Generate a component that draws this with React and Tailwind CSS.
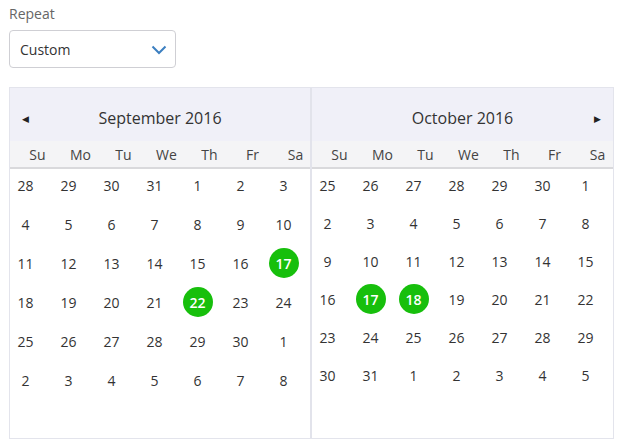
import React from "react";

const sep = [
  [28, 29, 30, 31, 1, 2, 3],
  [4, 5, 6, 7, 8, 9, 10],
  [11, 12, 13, 14, 15, 16, 17],
  [18, 19, 20, 21, 22, 23, 24],
  [25, 26, 27, 28, 29, 30, 1],
  [2, 3, 4, 5, 6, 7, 8],
];
const oct = [
  [25, 26, 27, 28, 29, 30, 1],
  [2, 3, 4, 5, 6, 7, 8],
  [9, 10, 11, 12, 13, 14, 15],
  [16, 17, 18, 19, 20, 21, 22],
  [23, 24, 25, 26, 27, 28, 29],
  [30, 31, 1, 2, 3, 4, 5],
];
const days = ["Su", "Mo", "Tu", "We", "Th", "Fr", "Sa"];

function Month({ title, rows, selected, left, gapClass, widthClass }) {
  return (
    <div className={`${widthClass} flex flex-col overflow-hidden`}>
      <div className="relative h-[53px] bg-[#f0f0f8] flex items-center justify-center pt-[6px]">
        {left ? (
          <span className="absolute left-[12px] top-[24px] text-[9px] text-[#222]">◀</span>
        ) : (
          <span className="absolute right-[12px] top-[24px] text-[9px] text-[#222]">▶</span>
        )}
        <span className="text-[16px] text-[#333]">{title}</span>
      </div>
      <div className="h-[28px] bg-[#f4f4f6] border-b-2 border-[#d9d9dc] flex items-center">
        <div className="ml-[6px] grid grid-cols-[repeat(7,43px)] shrink-0">
          {days.map((d) => (
            <div key={d} className="text-center text-[14px] text-[#444]">
              {d}
            </div>
          ))}
        </div>
      </div>
      <div className={`-ml-[6px] pt-0 grid grid-cols-[repeat(7,43px)] auto-rows-[32px] ${gapClass} shrink-0 w-[301px]`}>
        {rows.flatMap((r, ri) =>
          r.map((d, ci) => {
            const sel = selected.some(([a, b]) => a === ri && b === ci);
            return (
              <div key={`${ri}-${ci}`} className="flex items-center justify-center">
                {sel ? (
                  <span className="w-[30px] h-[30px] rounded-full bg-[#17bf0c] text-white font-semibold text-[14px] flex items-center justify-center">
                    {d}
                  </span>
                ) : (
                  <span className="text-[14px] text-[#333]">{d}</span>
                )}
              </div>
            );
          })
        )}
      </div>
    </div>
  );
}

export default function App() {
  return (
    <div className="w-[619px] h-[445px] bg-white font-['Open_Sans',sans-serif] pl-[9px] pt-[4px]">
      <div className="text-[14px] leading-[20px] text-[#666]">Repeat</div>
      <div className="mt-[6px] w-[167px] h-[38px] border border-[#cfcfd4] rounded-[4px] flex items-center justify-between pl-[10px] pr-[8px]">
        <span className="text-[14px] text-[#333]">Custom</span>
        <svg width="16" height="10" viewBox="0 0 16 10" className="mt-[1px]">
          <path d="M1.5 1.5 L8 8 L14.5 1.5" fill="none" stroke="#3c7fc0" strokeWidth="2" />
        </svg>
      </div>
      <div className="mt-[19px] w-[605px] h-[352px] border border-[#e3e4ec] flex">
        <Month
          title="September 2016"
          rows={sep}
          selected={[[2, 6], [3, 4]]}
          left
          gapClass="gap-y-[7px]"
          widthClass="w-[300px]"
        />
        <div className="w-[2px] bg-[#e2e3eb]" />
        <Month
          title="October 2016"
          rows={oct}
          selected={[[3, 1], [3, 2]]}
          left={false}
          gapClass="gap-y-[6px]"
          widthClass="w-[301px]"
        />
      </div>
    </div>
  );
}
